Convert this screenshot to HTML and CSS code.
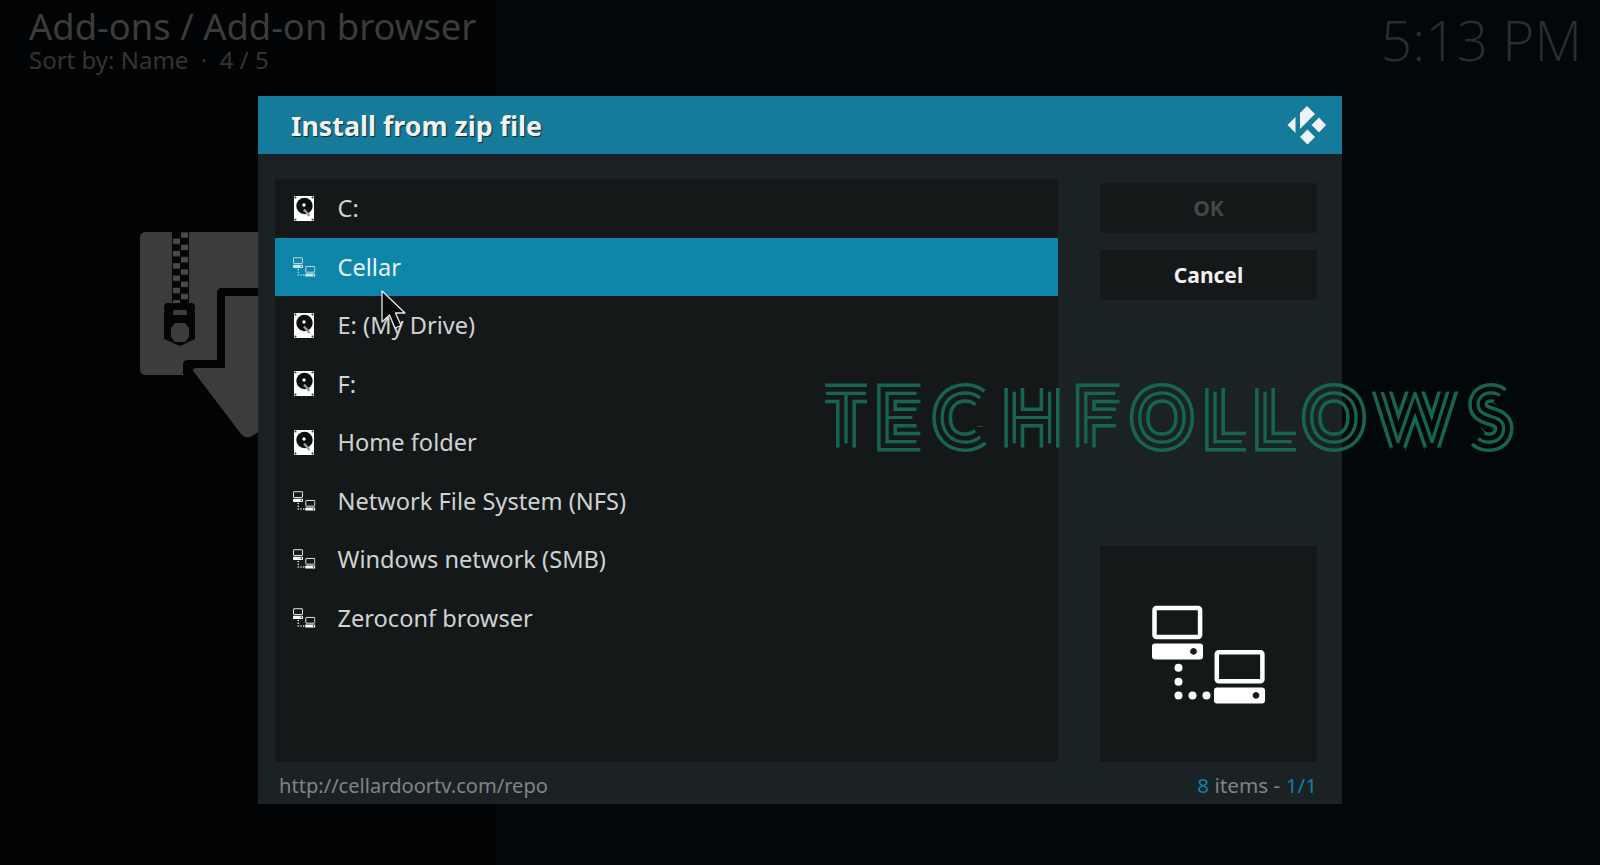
FILE: index.html
```html
<!DOCTYPE html>
<html lang="en">
<head>
<meta charset="utf-8">
<title>Install from zip file</title>
<link rel="stylesheet" href="styles.css">
</head>
<body>
<svg class="defs" width="0" height="0" aria-hidden="true">
  <defs>
    <symbol id="net" viewBox="0 0 114 99">
      <rect x="2.5" y="2.5" width="45.6" height="29" rx="2" fill="none" stroke="currentColor" stroke-width="4.5"/>
      <path fill-rule="evenodd" fill="currentColor" d="M3 38H48a3 3 0 0 1 3 3V51a3 3 0 0 1-3 3H3a3 3 0 0 1-3-3V41a3 3 0 0 1 3-3ZM41.5 42.5a3.4 3.4 0 1 0 .01 0Z"/>
      <rect x="64.8" y="46.8" width="45.6" height="29" rx="2" fill="none" stroke="currentColor" stroke-width="4.5"/>
      <path fill-rule="evenodd" fill="currentColor" d="M65 82H110a3 3 0 0 1 3 3V95a3 3 0 0 1-3 3H65a3 3 0 0 1-3-3V85a3 3 0 0 1 3-3ZM104 86.5a3.4 3.4 0 1 0 .01 0Z"/>
      <g fill="currentColor"><circle cx="26.5" cy="62.3" r="4"/><circle cx="26.5" cy="76.3" r="4"/><circle cx="26.5" cy="90" r="4"/><circle cx="40.5" cy="90" r="4"/><circle cx="54.5" cy="90" r="4"/></g>
    </symbol>
    <symbol id="hdd" viewBox="0 0 20 25">
      <path fill="#fff" d="M1 0H19a1 1 0 0 1 1 1V24a1 1 0 0 1-1 1H1a1 1 0 0 1-1-1V1a1 1 0 0 1 1-1Z"/>
      <circle cx="10.5" cy="10" r="8.2" fill="#0c0e0f"/>
      <circle cx="10" cy="9" r="1.7" fill="#fff"/>
      <path d="M10 13.5 15.5 20" stroke="#9a9a9a" stroke-width="2.4"/>
      <g fill="#333"><circle cx="1.5" cy="1.5" r="1"/><circle cx="18.5" cy="1.5" r="1"/><circle cx="1.5" cy="23.5" r="1"/><circle cx="18.5" cy="23.5" r="1"/></g>
    </symbol>
    <pattern id="zip" x="172" y="232" width="17" height="12.3" patternUnits="userSpaceOnUse">
      <rect width="17" height="12.3" fill="#040506"/>
      <rect x="9" y="0.4" width="7" height="5.4" fill="#4a4a4a"/>
      <rect x="1" y="6.6" width="7" height="5.4" fill="#4a4a4a"/>
    </pattern>
    <mask id="wm-mask" maskUnits="userSpaceOnUse" x="0" y="0" width="1600" height="865">
      <text class="wm-glyphs wm-s1" x="846 899 961 1032 1097 1162 1224 1274 1334 1415 1490" y="442">TECHFOLLOWS</text>
      <text class="wm-glyphs wm-s2" x="846 899 961 1032 1097 1162 1224 1274 1334 1415 1490" y="442">TECHFOLLOWS</text>
      <text class="wm-glyphs wm-s3" x="846 899 961 1032 1097 1162 1224 1274 1334 1415 1490" y="442">TECHFOLLOWS</text>
      <path class="wm-cut" d="M815 380H825V405H815Z M867 380H877V405H867Z M835 447.5H858V454H835Z
        M920.5 380H926V404H920.5Z M916.5 406H922V429H916.5Z M920.3 430H927V454H920.3Z
        M985.6 389.5H1000.5V411.3L973.5 407.9Z M986.8 444.6H1000.5V425.1L972.5 427.4Z
        M1003 380H1025V388H1003Z M1038 380H1061V388H1038Z M1003 447.5H1025V454H1003Z M1038 447.5H1061V454H1038Z
        M1074 447.5H1097V454H1074Z M1119.5 380H1126V404H1119.5Z M1116 406H1122V429H1116Z
        M1204 380H1226V388H1204Z M1246 430H1251V454H1246Z
        M1254 380H1276V388H1254Z M1296 430H1301V454H1296Z
        M1369 380H1461V391.5H1369Z M1390.4 447.5H1405.3V454H1390.4Z M1424.4 447.5H1440V454H1424.4Z
        M1507.5 387.9H1521.2V410.9L1505.2 408.6 1498.3 407.4 1493.2 401.7Z
        M1470.7 445.3 1485 432.7 1478.8 425.8H1457V445.3Z"/>
    </mask>
  </defs>
</svg>

<div class="backdrop-left"></div>

<header class="topbar">
  <div class="crumbs">
    <div class="crumb-title">Add-ons / Add-on browser</div>
    <div class="crumb-sub">Sort by: Name &nbsp;·&nbsp; 4 / 5</div>
  </div>
  <div class="clock">5:13 PM</div>
</header>

<svg class="zip-art" width="1600" height="865" viewBox="0 0 1600 865" aria-hidden="true">
  <path class="zip-fill" d="M146 232H270V288H222q-5 0-5 5V360H188q-5 0-5 5V375H146q-6 0-6-6V238q0-6 6-6Z"/>
  <path class="zip-fill" d="M225 296H270V425L252 436Q247 440 241 434L194 372Q191 368 196 368H225Z"/>
  <rect x="172" y="232" width="17" height="72" fill="url(#zip)"/>
  <rect class="zip-dark" x="164" y="303" width="31" height="10" rx="4"/>
  <path class="zip-dark" d="M164 312H195V339L180 346 164 339Z"/>
  <rect class="zip-fill" x="173" y="310" width="14" height="5" rx="1"/>
  <path class="zip-fill" d="M175 323H185L189 328V337L185 342H175L171 337V328Z"/>
</svg>

<main class="dialog">
  <div class="dialog-head">
    <h1 class="dialog-title">Install from zip file</h1>
    <svg class="kodi" width="40" height="40" viewBox="0 0 40 40" aria-hidden="true">
      <path d="M9.5 13 1.5 21 9.5 29Z"/>
      <path d="M21 2 29 10 14 25V9Z"/>
      <path d="M33 13.500 40 21 33 28.500 25.500 21Z"/>
      <path d="M21.500 25.500 29 33 21.500 40.500 14 33Z"/>
    </svg>
  </div>
  <div class="dialog-body">
    <ul class="list">
      <li class="row"><svg class="ico-hdd"><use href="#hdd"/></svg><span>C:</span></li>
      <li class="row row-on"><svg class="ico-net"><use href="#net"/></svg><span>Cellar</span></li>
      <li class="row"><svg class="ico-hdd"><use href="#hdd"/></svg><span>E: (My Drive)</span></li>
      <li class="row"><svg class="ico-hdd"><use href="#hdd"/></svg><span>F:</span></li>
      <li class="row"><svg class="ico-hdd"><use href="#hdd"/></svg><span>Home folder</span></li>
      <li class="row"><svg class="ico-net"><use href="#net"/></svg><span>Network File System (NFS)</span></li>
      <li class="row"><svg class="ico-net"><use href="#net"/></svg><span>Windows network (SMB)</span></li>
      <li class="row"><svg class="ico-net"><use href="#net"/></svg><span>Zeroconf browser</span></li>
    </ul>
    <aside class="side">
      <button class="btn btn-off">OK</button>
      <button class="btn">Cancel</button>
      <div class="thumb"><svg class="thumb-net"><use href="#net"/></svg></div>
    </aside>
  </div>
  <footer class="dialog-foot">
    <span class="path">http://cellardoortv.com/repo</span>
    <span class="count"><b>8</b> items - <b>1/1</b></span>
  </footer>
</main>

<svg class="watermark" width="1600" height="865" viewBox="0 0 1600 865">
  <text class="wm-glyphs wm-ink" mask="url(#wm-mask)" x="846 899 961 1032 1097 1162 1224 1274 1334 1415 1490" y="442">TECHFOLLOWS</text>
</svg>

<svg class="pointer" width="30" height="46" viewBox="0 0 30 46" aria-hidden="true">
  <path d="M2 2V33L9.500 26 15 39 21 36.500 15.500 24H25Z" fill="#08090a" stroke="#e8e8e8" stroke-width="1.300" stroke-linejoin="round"/>
</svg>
</body>
</html>
```
FILE: styles.css
```css
* { box-sizing: border-box; }
html, body { margin: 0; padding: 0; height: 100%; }
body {
  width: 1600px;
  height: 865px;
  overflow: hidden;
  position: relative;
  background: #01070a;
  font-family: "Noto Sans", "Open Sans", sans-serif;
}
.defs { position: absolute; }
.backdrop-left {
  position: absolute;
  left: 0; top: 0;
  width: 496px; height: 865px;
  background: #020304;
}
.topbar {
  position: relative;
  display: flex;
  justify-content: space-between;
  align-items: flex-start;
  padding: 0 18px 0 29px;
}
.crumbs { padding-top: 5px; }
.crumb-title {
  font-size: 36.400px;
  line-height: 42px;
  color: #3a3c3c;
}
.crumb-sub {
  font-size: 24px;
  line-height: 26px;
  color: #333535;
  white-space: pre;
}
.clock {
  font-family: "Open Sans", "Noto Sans", sans-serif;
  font-weight: 300;
  font-size: 55px;
  line-height: 80px;
  color: #2b2d2d;
}
.zip-art { position: absolute; left: 0; top: 0; }
.zip-fill { fill: #3c3c3c; }
.zip-dark { fill: #040506; }

.dialog {
  position: absolute;
  left: 258px; top: 96px;
  width: 1084px; height: 708px;
  background: #1a2225;
  display: flex;
  flex-direction: column;
}
.dialog-head {
  height: 58px;
  flex: none;
  background: #167a9a;
  display: flex;
  align-items: center;
  justify-content: space-between;
  padding: 0 16px 0 33px;
}
.dialog-title {
  margin: 1px 0 0;
  font-size: 26.800px;
  font-weight: 700;
  color: #f2f2f2;
  text-shadow: 1px 1px 1px #0a2a35;
}
.kodi { fill: #eef5f8; display: block; margin-top: -3px; }
.dialog-body {
  flex: 1;
  display: flex;
  gap: 42px;
  padding: 25px 25px 0 17px;
}
.list {
  list-style: none;
  margin: 0;
  padding: 0;
  width: 783px;
  background: #141819;
  border-radius: 3px;
}
.row {
  height: 58.500px;
  display: flex;
  align-items: center;
  font-size: 23.600px;
  color: #d0d2d2;
  padding-left: 18px;
}
.row span { margin-left: 22px; }
.row-on { background: #0e86a9; color: #e6f2f5; }
.ico-hdd { width: 20px; height: 25px; margin-left: 1px; margin-right: 1.500px; }
.ico-net { width: 22.500px; height: 20px; color: #fff; }
.row-on .ico-net { color: #cfe6ee; }
.side {
  width: 217px;
  display: flex;
  flex-direction: column;
  gap: 17px;
  padding-top: 4px;
}
.btn {
  height: 50px;
  border: 0;
  border-radius: 3px;
  background: #141819;
  color: #f2f2f2;
  font-family: inherit;
  font-size: 21px;
  font-weight: 700;
}
.btn-off { color: #444747; }
.thumb {
  margin-top: auto;
  height: 216.500px;
  background: #141819;
  display: flex;
  align-items: center;
  justify-content: center;
}
.thumb-net { width: 114px; height: 100px; color: #fff; margin-top: 2px; }
.dialog-foot {
  height: 42px;
  flex: none;
  display: flex;
  align-items: center;
  justify-content: space-between;
  padding: 4px 25px 0 21px;
  font-size: 20.100px;
  color: #808484;
}
.count { font-size: 20.700px; }
.count b { font-weight: 400; color: #0f7fa3; }

.watermark { position: absolute; left: 0; top: 0; pointer-events: none; filter: blur(0.3px); }
.wm-glyphs {
  font-family: "Lato", "Inter", sans-serif;
  font-weight: 100;
  font-size: 70px;
  text-anchor: middle;
  stroke-linejoin: miter;
}
.wm-s1 { fill: #fff; stroke: #fff; stroke-width: 19px; }
.wm-s2 { fill: #000; stroke: #000; stroke-width: 12px; }
.wm-s3 { fill: #fff; stroke: #fff; stroke-width: 2.400px; }
.wm-cut { fill: #000; }
.wm-ink { fill: #176450; stroke: #176450; stroke-width: 22px; }
.pointer { position: absolute; left: 380px; top: 289px; }
```
